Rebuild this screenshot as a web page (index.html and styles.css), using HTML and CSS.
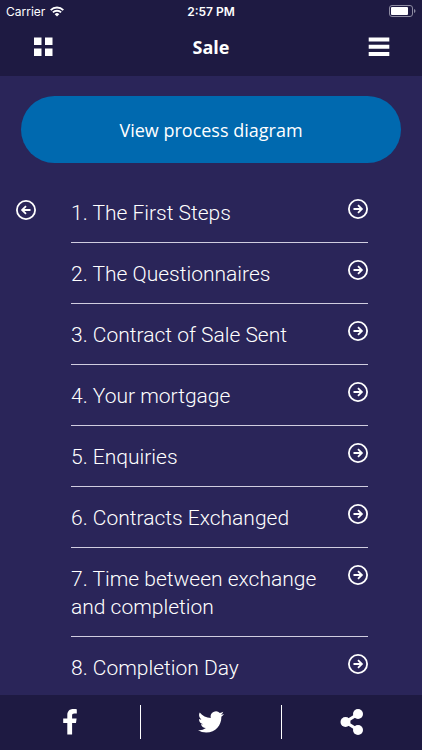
FILE: index.html
```html
<!DOCTYPE html>
<html lang="en">
  <head>
    <meta charset="UTF-8" />
    <meta name="viewport" content="width=device-width, initial-scale=1.0" />
    <title>Sale</title>
    <link rel="stylesheet" href="styles.css">
  </head>
  <body>
    <!-- Arrow shared by the back button and the list rows -->
    <svg class="symbols" aria-hidden="true">
      <symbol id="arrow" viewBox="0 0 20 20">
        <circle cx="10" cy="10" r="9.1" />
        <path d="M5.5 10h8M10 6.1l3.9 3.9-3.9 3.9" />
      </symbol>
    </svg>

    <header class="header">
      <div class="status">
        <div class="carrier">
          <span>Carrier</span>
          <svg width="14" height="11" viewBox="0 0 14 11" fill="none" stroke="#fff" stroke-width="1.9">
            <path d="M0.7 4.1a9 9 0 0 1 12.6 0" />
            <path d="M2.9 6.4a5.9 5.9 0 0 1 8.2 0" />
            <path d="M7 10.6L4.7 8.2a3.3 3.3 0 0 1 4.6 0z" fill="#fff" stroke="none" />
          </svg>
        </div>
        <span class="time">2:57 PM</span>
        <div class="battery">
          <svg width="27" height="12" viewBox="0 0 27 12">
            <rect x="0.5" y="0.5" width="23" height="11" rx="2.5" fill="none" stroke="#8e8ca2" />
            <rect x="2" y="2" width="17" height="8" rx="1" fill="#fff" />
            <path d="M25 4v4q1.5-.5 1.5-2T25 4z" fill="#8e8ca2" />
          </svg>
        </div>
      </div>

      <nav class="navbar">
        <button class="icon-button" aria-label="Dashboard">
          <svg width="22" height="20" viewBox="0 0 22 20" fill="#fff">
            <path d="M2 0.5h7.5v7.5h-7.5zM13 0.5h7.5v7.5h-7.5zM2 11.5h7.5v7.5h-7.5zM13 11.5h7.5v7.5h-7.5z" />
          </svg>
        </button>
        <h1>Sale</h1>
        <button class="icon-button" aria-label="Menu">
          <svg width="22" height="20" viewBox="0 0 22 20" fill="#fff">
            <path d="M0.7 0.5h20.6v4h-20.6zM0.7 7.7h20.6v4h-20.6zM0.7 15h20.6v4h-20.6z" />
          </svg>
        </button>
      </nav>
    </header>

    <main class="main">
      <button class="diagram-button">View process diagram</button>

      <div class="process">
        <button class="back" aria-label="Back">
          <svg class="arrow arrow-left"><use href="#arrow" /></svg>
        </button>
        <ul class="steps">
          <li><a href="#"><span>1. The First Steps</span><svg class="arrow"><use href="#arrow" /></svg></a></li>
          <li><a href="#"><span>2. The Questionnaires</span><svg class="arrow"><use href="#arrow" /></svg></a></li>
          <li><a href="#"><span>3. Contract of Sale Sent</span><svg class="arrow"><use href="#arrow" /></svg></a></li>
          <li><a href="#"><span>4. Your mortgage</span><svg class="arrow"><use href="#arrow" /></svg></a></li>
          <li><a href="#"><span>5. Enquiries</span><svg class="arrow"><use href="#arrow" /></svg></a></li>
          <li><a href="#"><span>6. Contracts Exchanged</span><svg class="arrow"><use href="#arrow" /></svg></a></li>
          <li><a href="#"><span>7. Time between exchange and completion</span><svg class="arrow"><use href="#arrow" /></svg></a></li>
          <li><a href="#"><span>8. Completion Day</span><svg class="arrow"><use href="#arrow" /></svg></a></li>
        </ul>
      </div>
    </main>

    <footer class="footer">
      <a href="#" aria-label="Facebook">
        <svg width="14" height="26" viewBox="0 0 14 26" fill="#fff">
          <path d="M13.8.2v4.2h-2.4c-1.9 0-2.3.9-2.3 2.2v2.9h4.5l-.6 4.5H9.1V25.5H4.3V14H.2V9.5h4.1V6C4.3 2.1 6.7 0 10.3 0c1.7 0 3.1.1 3.5.2z" />
        </svg>
      </a>
      <a href="#" aria-label="Twitter">
        <svg width="26" height="26" viewBox="0 0 24 24" fill="#fff">
          <path d="M23.95 4.57a10 10 0 0 1-2.82.77 4.96 4.96 0 0 0 2.16-2.72c-.95.55-2 .95-3.13 1.18a4.92 4.92 0 0 0-8.38 4.48C7.69 8.1 4.07 6.13 1.64 3.16a4.82 4.82 0 0 0-.67 2.48c0 1.71.87 3.21 2.19 4.1a4.9 4.9 0 0 1-2.23-.62v.06a4.92 4.92 0 0 0 3.95 4.83 5 5 0 0 1-2.21.08 4.94 4.94 0 0 0 4.6 3.42A9.87 9.87 0 0 1 0 19.54a13.99 13.99 0 0 0 7.55 2.21c9.05 0 14-7.5 14-13.99 0-.21 0-.42-.02-.63a9.94 9.94 0 0 0 2.46-2.55z" />
        </svg>
      </a>
      <a href="#" aria-label="Share">
        <svg width="24" height="26" viewBox="0 0 24 26" fill="#fff">
          <path d="M18 5L5.5 13 18 21" fill="none" stroke="#fff" stroke-width="3.2" />
          <circle cx="5.5" cy="13" r="5" />
          <circle cx="18" cy="5" r="5" />
          <circle cx="18" cy="21" r="5" />
        </svg>
      </a>
    </footer>
  </body>
</html>
```

FILE: styles.css
```css
* {
  box-sizing: border-box;
}

body {
  display: flex;
  flex-direction: column;
  min-height: 100vh;
  margin: 0;
  background-color: #2a2559;
  color: #fff;
  font-family: "Open Sans", sans-serif;
}

button {
  padding: 0;
  border: none;
  background: none;
  color: inherit;
  font-family: inherit;
  cursor: pointer;
}

a {
  color: inherit;
  text-decoration: none;
}

svg {
  display: block;
}

.symbols {
  position: absolute;
  width: 0;
  height: 0;
}

.header {
  background-color: #1e1a42;
}

.status {
  display: grid;
  grid-template-columns: 1fr auto 1fr;
  align-items: center;
  height: 22px;
  padding: 0 6px;
  font-family: Inter, sans-serif;
  font-size: 12px;
}

.carrier {
  display: flex;
  align-items: center;
  gap: 5px;
}

.time {
  font-weight: 600;
}

.battery {
  justify-self: end;
}

.navbar {
  display: flex;
  align-items: center;
  justify-content: space-between;
  height: 54px;
  padding: 0 32px 5px;
}

.navbar h1 {
  margin: 0;
  font-size: 18px;
  font-weight: 700;
}

.main {
  flex: 1;
  padding-top: 20px;
}

.diagram-button {
  display: block;
  width: calc(100% - 42px);
  height: 67px;
  margin: 0 auto;
  border-radius: 34px;
  background-color: #0069af;
  font-size: 18px;
}

.process {
  display: flex;
  align-items: flex-start;
  gap: 35px;
  padding: 19px 54px 0 16px;
}

.back {
  padding-top: 18px;
}

.arrow {
  flex: none;
  width: 20px;
  height: 20px;
  fill: none;
  stroke: #fff;
  stroke-width: 1.8;
}

.arrow-left {
  transform: rotate(180deg);
}

.steps {
  flex: 1;
  margin: 0;
  padding: 0;
  list-style: none;
  font-family: Roboto, sans-serif;
  font-size: 21px;
  font-weight: 300;
  line-height: 28px;
}

.steps a {
  display: flex;
  justify-content: space-between;
  gap: 20px;
  padding: 17px 0 15px;
}

.steps li {
  border-bottom: 1px solid #d0cde0;
}

.steps li:last-child {
  border-bottom: none;
}

.steps li:last-child a {
  padding-bottom: 0;
}

.footer {
  position: sticky;
  bottom: 0;
  display: flex;
  padding: 10px 0 11px;
  background-color: #1e1a42;
}

.footer a {
  display: flex;
  flex: 1;
  align-items: center;
  justify-content: center;
  height: 34px;
}

.footer a + a {
  border-left: 1px solid #fff;
}
```
